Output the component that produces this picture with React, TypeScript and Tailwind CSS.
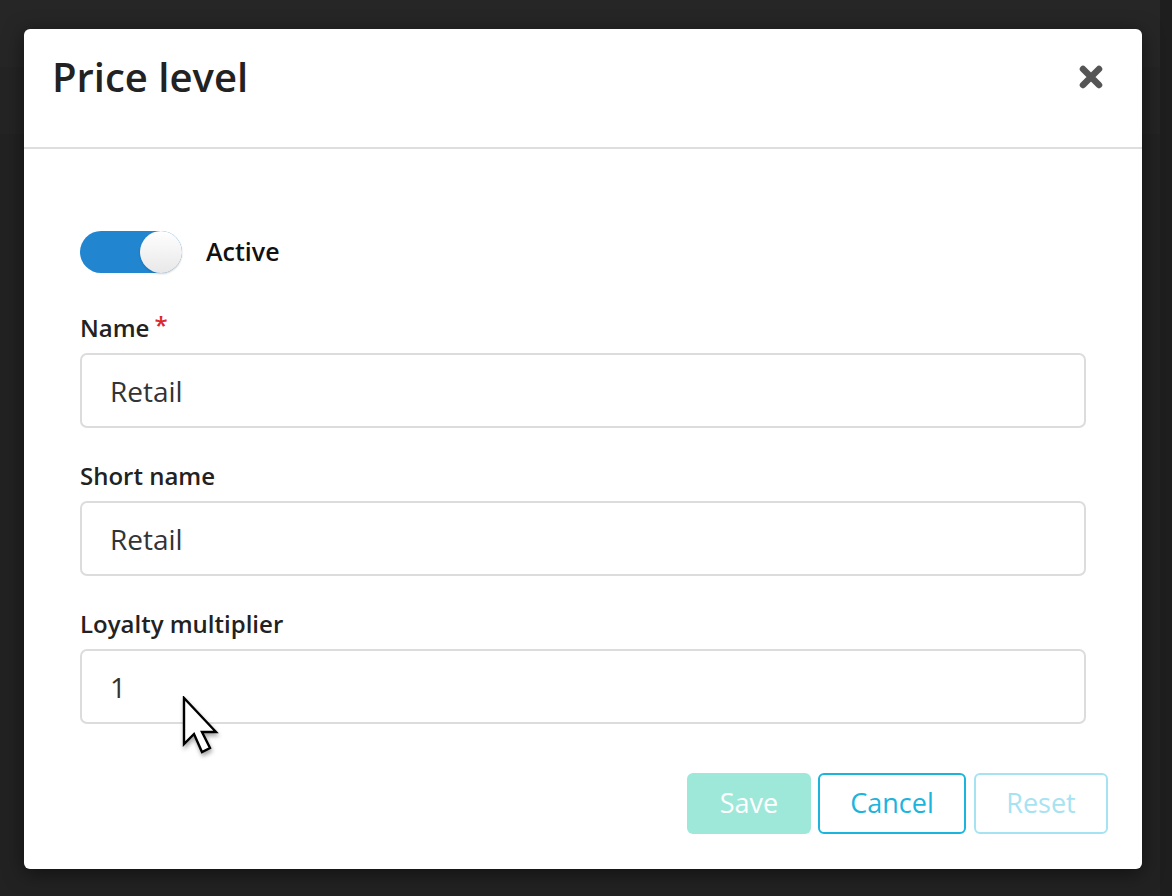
import { useState } from 'react';

function Field({ label, value, required }: { label: string; value: string; required?: boolean }) {
    return (
        <div className="flex flex-col">
            <label className="h-[30px] mb-[10px] text-[24px] leading-[30px] font-semibold text-[#222]">
                {label}
                {required && <span className="text-[#db2828] ml-[5px] relative -top-[3px]">*</span>}
            </label>
            <input
                defaultValue={value}
                className="h-[75px] w-full rounded-[7px] border-2 border-[#dcdcdc] bg-white px-[28px] text-[28px] text-[#333] outline-none"
            />
        </div>
    );
}

export default function App() {
    const [active, setActive] = useState(true);

    return (
        <div
            className="relative h-[896px] w-[1172px] overflow-hidden bg-[#222222]"
            style={{ fontFamily: '"Open Sans", "Noto Sans", sans-serif' }}
        >
            {/* backdrop of the page behind the modal */}
            <div className="absolute left-0 top-0 h-[67px] w-full bg-[#262626]" />
            <div className="absolute left-0 top-[67px] h-[67px] w-full bg-[#242424]" />
            <div className="absolute right-0 top-0 h-full w-[12px] bg-[#1e1e1e]" />

            <div className="relative ml-[24px] mt-[29px] flex h-[840px] w-[1118px] flex-col rounded-[6px] bg-white shadow-[0_4px_20px_rgba(0,0,0,0.5)]">
                {/* Header */}
                <div className="flex h-[120px] items-center justify-between border-b-2 border-[#dedede] pl-[28px] pr-[38px] pb-[22px]">
                    <h1 className="text-[40px] font-semibold text-[#222] leading-none">Price level</h1>
                    <button className="text-[#555]">
                        <svg width="26" height="26" viewBox="0 0 26 26">
                            <path d="M5 5 L21 21 M21 5 L5 21" stroke="currentColor" strokeWidth="6.5" strokeLinecap="round" />
                        </svg>
                    </button>
                </div>

                {/* Body */}
                <div className="flex flex-1 flex-col px-[56px] pt-[82px]">
                    <div className="flex items-center gap-[24px]">
                        <button
                            onClick={() => setActive(!active)}
                            className={`flex h-[42px] w-[102px] items-center rounded-full ${active ? 'justify-end bg-[#2185d0]' : 'justify-start bg-[#ccc]'}`}
                        >
                            <span className="h-[42px] w-[42px] rounded-full bg-gradient-to-b from-white to-[#e8e8e8] shadow-[0_1px_2px_rgba(0,0,0,0.2)]" />
                        </button>
                        <span className="text-[25px] font-semibold text-[#111]">Active</span>
                    </div>

                    <div className="mt-[40px] flex flex-col gap-[33px]">
                        <Field label="Name" value="Retail" required />
                        <Field label="Short name" value="Retail" />
                        <Field label="Loyalty multiplier" value="1" />
                    </div>

                    <div className="mt-[49px] -mr-[22px] flex justify-end gap-[7px]">
                        <button className="h-[61px] w-[124px] rounded-[6px] bg-[#9ee8da] text-[27px] text-white">Save</button>
                        <button className="h-[61px] w-[148px] rounded-[6px] border-2 border-[#1bb4dd] text-[27px] text-[#1bb4dd]">Cancel</button>
                        <button className="ml-[1px] h-[61px] w-[134px] rounded-[6px] border-2 border-[#a6e3f2] text-[27px] text-[#a6e3f2]">Reset</button>
                    </div>
                </div>
            </div>

            {/* mouse pointer */}
            <svg className="absolute left-[182px] top-[696px]" width="42" height="64" viewBox="0 0 21 32" style={{ filter: 'drop-shadow(1px 3px 2px rgba(0,0,0,0.35))' }}>
                <path d="M1 1 L1 24 L6 19 L10 28 L14 26 L10 18 L17 18 Z" fill="white" stroke="black" strokeWidth="1.2" strokeLinejoin="miter" />
            </svg>
        </div>
    );
}
